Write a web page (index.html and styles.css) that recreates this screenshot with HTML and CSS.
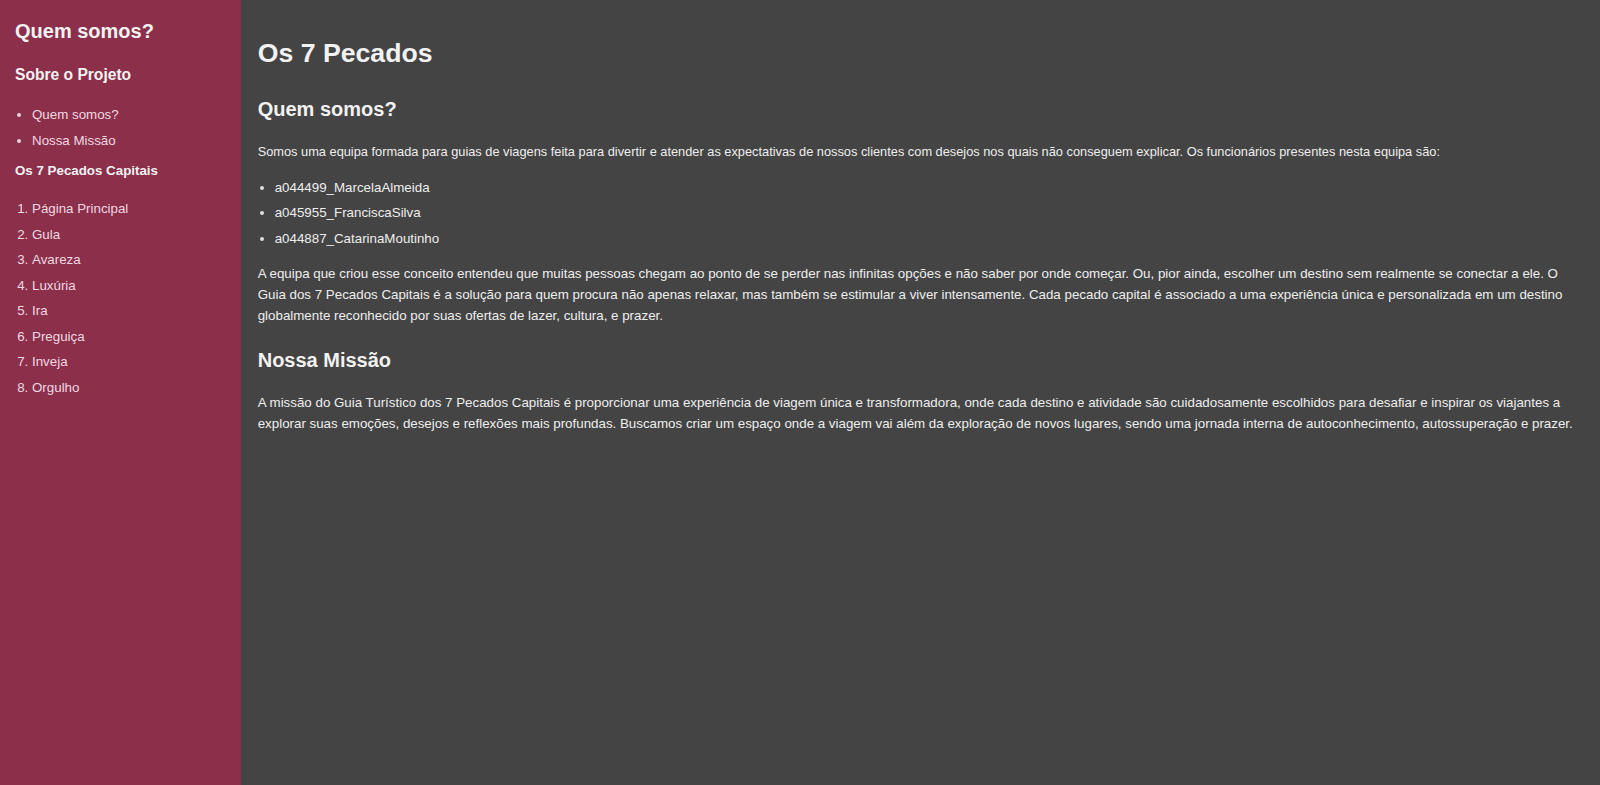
FILE: index.html
```html
<!DOCTYPE html>
<html lang="pt">
<head>
<meta charset="utf-8">
<title>Os 7 Pecados</title>
<link rel="stylesheet" href="styles.css">
</head>
<body>
<div class="layout">
  <aside class="sidebar">
    <h2 class="side-title">Quem somos?</h2>
    <h3 class="side-sub">Sobre o Projeto</h3>
    <ul class="side-list">
      <li><a href="#quem">Quem somos?</a></li>
      <li><a href="#missao">Nossa Missão</a></li>
    </ul>
    <h4 class="side-sub2">Os 7 Pecados Capitais</h4>
    <ol class="side-olist">
      <li><a href="#">Página Principal</a></li>
      <li><a href="#">Gula</a></li>
      <li><a href="#">Avareza</a></li>
      <li><a href="#">Luxúria</a></li>
      <li><a href="#">Ira</a></li>
      <li><a href="#">Preguiça</a></li>
      <li><a href="#">Inveja</a></li>
      <li><a href="#">Orgulho</a></li>
    </ol>
  </aside>
  <main class="content">
    <h1 class="page-title">Os 7 Pecados</h1>
    <section id="quem" class="section">
      <h2 class="section-title">Quem somos?</h2>
      <p class="intro">Somos uma equipa formada para guias de viagens feita para divertir e atender as expectativas de nossos clientes com desejos nos quais não conseguem explicar. Os funcionários presentes nesta equipa são:</p>
      <ul class="members">
        <li>a044499_MarcelaAlmeida</li>
        <li>a045955_FranciscaSilva</li>
        <li>a044887_CatarinaMoutinho</li>
      </ul>
      <p class="text after-list">A equipa que criou esse conceito entendeu que muitas pessoas chegam ao ponto de se perder nas infinitas opções e não saber por onde começar. Ou, pior ainda, escolher um destino sem realmente se conectar a ele. O Guia dos 7 Pecados Capitais é a solução para quem procura não apenas relaxar, mas também se estimular a viver intensamente. Cada pecado capital é associado a uma experiência única e personalizada em um destino globalmente reconhecido por suas ofertas de lazer, cultura, e prazer.</p>
    </section>
    <section id="missao" class="section">
      <h2 class="section-title mission">Nossa Missão</h2>
      <p class="text after-title">A missão do Guia Turístico dos 7 Pecados Capitais é proporcionar uma experiência de viagem única e transformadora, onde cada destino e atividade são cuidadosamente escolhidos para desafiar e inspirar os viajantes a explorar suas emoções, desejos e reflexões mais profundas. Buscamos criar um espaço onde a viagem vai além da exploração de novos lugares, sendo uma jornada interna de autoconhecimento, autossuperação e prazer.</p>
    </section>
  </main>
</div>
</body>
</html>
```

FILE: styles.css
```css
html, body {
  margin: 0;
  padding: 0;
  height: 100%;
}

body {
  font-family: "Liberation Sans", Arial, sans-serif;
  font-size: 13.33px;
  background: #444444;
  color: #eeeeee;
}

.layout {
  display: flex;
  min-height: 785px;
}

.sidebar {
  width: 241px;
  flex: 0 0 241px;
  background: #8b2f4b;
  box-sizing: border-box;
  padding: 20px 15px;
  color: #f2f2f2;
}

.side-title {
  margin: 0;
  font-size: 20px;
  line-height: 23px;
  font-weight: bold;
}

.side-sub {
  margin: 23px 0 0;
  font-size: 15.6px;
  line-height: 18px;
  font-weight: bold;
}

.side-list,
.side-olist {
  margin: 0;
  padding-left: 17px;
}

.side-list {
  margin-top: 18px;
}

.side-list li,
.side-olist li {
  line-height: 15px;
  padding: 5px 0 5.5px;
}

.side-list li::marker {
  color: #e6d3da;
}

.side-list a,
.side-olist a {
  color: #f0d8e0;
  text-decoration: none;
}

.side-olist li::marker {
  color: #f0d8e0;
}

.side-sub2 {
  margin: 10px 0 0;
  font-size: 13.33px;
  line-height: 15px;
  font-weight: bold;
}

.side-olist {
  margin-top: 18px;
}

.content {
  flex: 1;
  min-width: 0;
  padding: 38px 16.7px 20px;
}

.page-title {
  margin: 0;
  font-size: 26.67px;
  line-height: 31px;
  font-weight: bold;
  color: #f2f2f2;
}

.section-title {
  margin: 28.5px 0 0;
  font-size: 20px;
  line-height: 23px;
  font-weight: bold;
  color: #f2f2f2;
}

.section-title.mission {
  margin-top: 23px;
}

.intro,
.text {
  margin: 0;
  line-height: 20.83px;
}

.intro {
  margin-top: 21.5px;
  font-size: 12.8px;
}

.after-list {
  margin-top: 8.5px;
}

.text.after-list {
  line-height: 21.2px;
}

.after-title {
  margin-top: 20.5px;
}

.members {
  margin: 15px 0 0;
  padding-left: 17px;
}

.members li {
  line-height: 20.83px;
  padding-bottom: 4.7px;
}

.members li::marker {
  color: #dddddd;
}
```
